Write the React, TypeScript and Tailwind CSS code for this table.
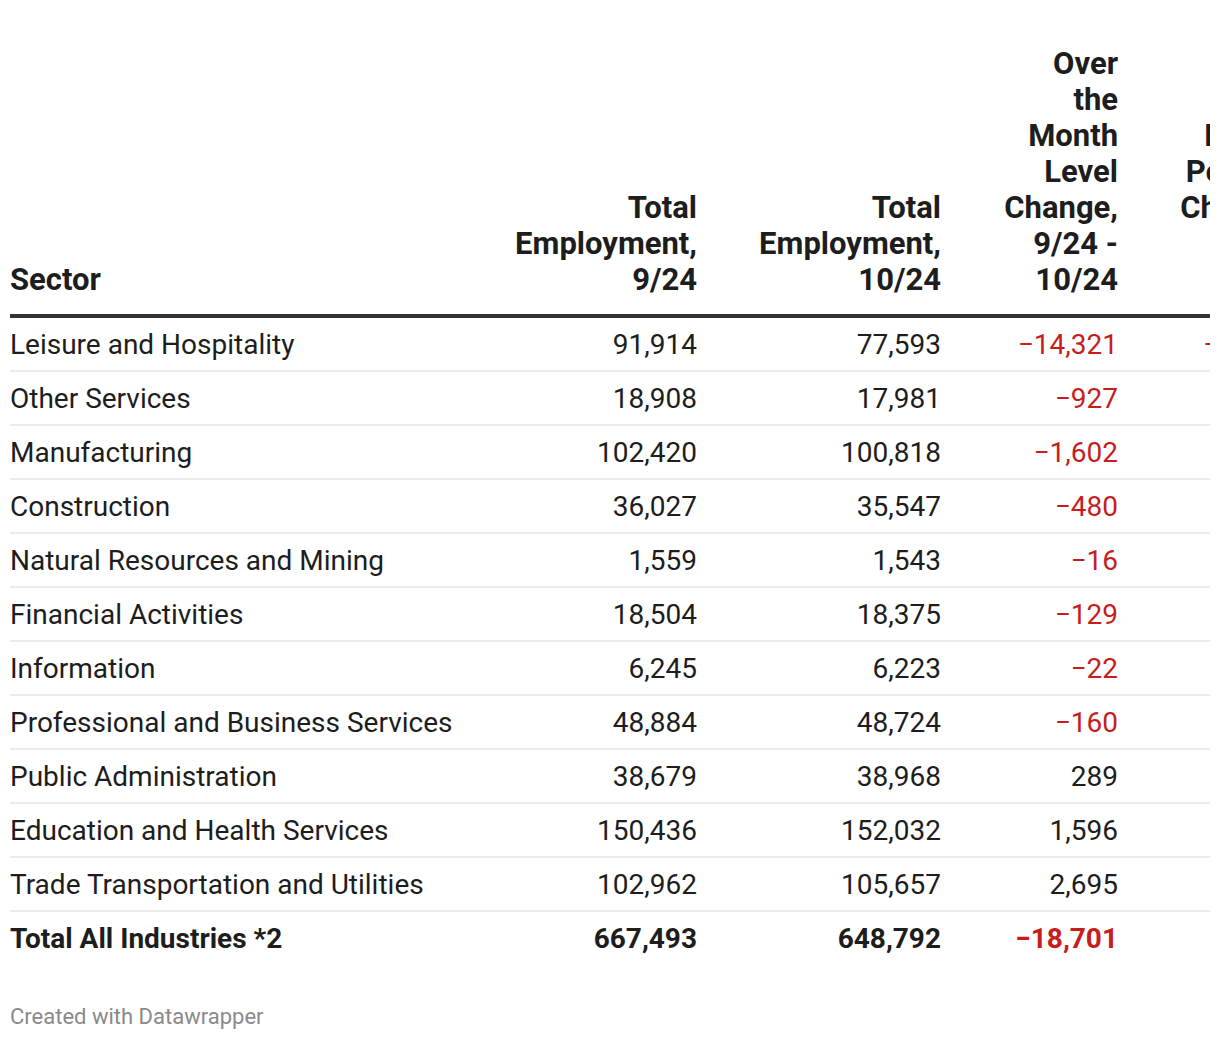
import React from "react";

type Row = { s: string; a: string; b: string; c: string; d: string; neg: boolean };

const rows: Row[] = [
  { s: "Leisure and Hospitality", a: "91,914", b: "77,593", c: "−14,321", d: "−15.6%", neg: true },
  { s: "Other Services", a: "18,908", b: "17,981", c: "−927", d: "−4.9%", neg: true },
  { s: "Manufacturing", a: "102,420", b: "100,818", c: "−1,602", d: "−1.6%", neg: true },
  { s: "Construction", a: "36,027", b: "35,547", c: "−480", d: "−1.3%", neg: true },
  { s: "Natural Resources and Mining", a: "1,559", b: "1,543", c: "−16", d: "−1.0%", neg: true },
  { s: "Financial Activities", a: "18,504", b: "18,375", c: "−129", d: "−0.7%", neg: true },
  { s: "Information", a: "6,245", b: "6,223", c: "−22", d: "−0.4%", neg: true },
  { s: "Professional and Business Services", a: "48,884", b: "48,724", c: "−160", d: "−0.3%", neg: true },
  { s: "Public Administration", a: "38,679", b: "38,968", c: "289", d: "0.7%", neg: false },
  { s: "Education and Health Services", a: "150,436", b: "152,032", c: "1,596", d: "1.1%", neg: false },
  { s: "Trade Transportation and Utilities", a: "102,962", b: "105,657", c: "2,695", d: "2.6%", neg: false },
];

const grid = "grid grid-cols-[453px_234px_244px_177px_176px] w-[1284px]";

function Lines({ lines }: { lines: string[] }) {
  return (
    <div className="text-right whitespace-nowrap">
      {lines.map((l) => (
        <div key={l}>{l}</div>
      ))}
    </div>
  );
}

export default function App() {
  return (
    <div
      className="bg-white min-h-[1040px] pt-[46px] pl-[10px] text-[#1d1d1d]"
      style={{ fontFamily: "Roboto, 'Liberation Sans', sans-serif" }}
    >
      <div className="w-[1200px] overflow-hidden">
        {/* header */}
        <div className={`${grid} items-end border-b-4 border-[#333333] pb-[16px] text-[31px] font-bold leading-[36px]`}>
          <div>Sector</div>
          <div className="flex justify-end">
            <Lines lines={["Total", "Employment,", "9/24"]} />
          </div>
          <div className="flex justify-end">
            <Lines lines={["Total", "Employment,", "10/24"]} />
          </div>
          <div className="flex justify-end">
            <Lines lines={["Over", "the", "Month", "Level", "Change,", "9/24 -", "10/24"]} />
          </div>
          <div className="flex justify-end">
            <Lines lines={["Over", "the", "Month", "Percent", "Change,", "9/24 -", "10/24"]} />
          </div>
        </div>
        {/* body */}
        {rows.map((r) => (
          <div
            key={r.s}
            className={`${grid} h-[54px] pt-[2px] items-center border-b-2 border-[#ebebeb] text-[28px] leading-[32px]`}
          >
            <div className="whitespace-nowrap">{r.s}</div>
            <div className="text-right">{r.a}</div>
            <div className="text-right">{r.b}</div>
            <div className={`text-right ${r.neg ? "text-[#c71e1d]" : ""}`}>{r.c}</div>
            <div className={`text-right ${r.neg ? "text-[#c71e1d]" : ""}`}>{r.d}</div>
          </div>
        ))}
        <div className={`${grid} h-[52px] pt-[2px] items-center text-[28px] leading-[32px] font-bold`}>
          <div className="whitespace-nowrap">Total All Industries *2</div>
          <div className="text-right">667,493</div>
          <div className="text-right">648,792</div>
          <div className="text-right text-[#c71e1d]">−18,701</div>
          <div className="text-right text-[#c71e1d]">−2.8%</div>
        </div>
      </div>
      <div className="mt-[41px] text-[22px] leading-[24px] text-[#8a8a8a]">Created with Datawrapper</div>
    </div>
  );
}
